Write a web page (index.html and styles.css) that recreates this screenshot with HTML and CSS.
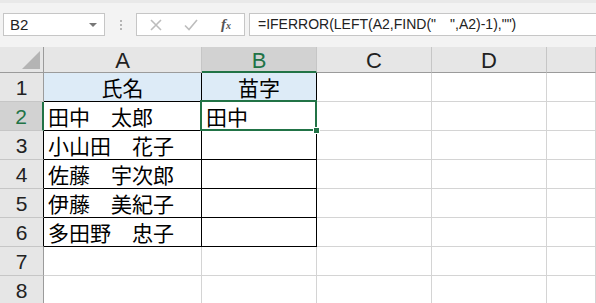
FILE: index.html
```html
<!DOCTYPE html>
<html lang="ja">
<head>
  <meta charset="UTF-8" />
  <meta name="viewport" content="width=device-width, initial-scale=1.0"/>
  <title>Excel - 苗字</title>
  <link rel="stylesheet" href="styles.css">
</head>
<body>
  <!-- 数式バー -->
  <div class="toolbar">
    <div class="name-box">
      <span>B2</span>
      <span class="drop"></span>
    </div>
    <div class="grip"><i></i><i></i><i></i></div>
    <div class="fx-box">
      <svg width="14" height="14" viewBox="0 0 14 14"><path d="M2 2 L12 12 M12 2 L2 12" stroke="#bdbdbd" stroke-width="1.6" fill="none"/></svg>
      <svg width="16" height="14" viewBox="0 0 16 14"><path d="M2 7.5 L6 11.5 L14 2" stroke="#bdbdbd" stroke-width="1.6" fill="none"/></svg>
      <span class="fx">f<sub>x</sub></span>
    </div>
    <div class="formula">=IFERROR(LEFT(A2,FIND("　",A2)-1),"")</div>
  </div>

  <!-- シート -->
  <div class="sheet">
    <div class="corner"><span class="tri"></span></div>
    <div class="col-h">A</div>
    <div class="col-h sel">B</div>
    <div class="col-h">C</div>
    <div class="col-h">D</div>
    <div class="col-h"></div>

    <div class="row-h">1</div>
    <div class="cell tb head">氏名</div>
    <div class="cell tb head">苗字</div>
    <div class="cell"></div>
    <div class="cell"></div>
    <div class="cell"></div>

    <div class="row-h sel">2</div>
    <div class="cell tb">田中　太郎</div>
    <div class="cell tb active">田中</div>
    <div class="cell"></div>
    <div class="cell"></div>
    <div class="cell"></div>

    <div class="row-h edge">3</div>
    <div class="cell tb">小山田　花子</div>
    <div class="cell tb"></div>
    <div class="cell"></div>
    <div class="cell"></div>
    <div class="cell"></div>

    <div class="row-h edge">4</div>
    <div class="cell tb">佐藤　宇次郎</div>
    <div class="cell tb"></div>
    <div class="cell"></div>
    <div class="cell"></div>
    <div class="cell"></div>

    <div class="row-h edge">5</div>
    <div class="cell tb">伊藤　美紀子</div>
    <div class="cell tb"></div>
    <div class="cell"></div>
    <div class="cell"></div>
    <div class="cell"></div>

    <div class="row-h edge">6</div>
    <div class="cell tb">多田野　忠子</div>
    <div class="cell tb"></div>
    <div class="cell"></div>
    <div class="cell"></div>
    <div class="cell"></div>

    <div class="row-h">7</div>
    <div class="cell"></div>
    <div class="cell"></div>
    <div class="cell"></div>
    <div class="cell"></div>
    <div class="cell"></div>

    <div class="row-h">8</div>
    <div class="cell"></div>
    <div class="cell"></div>
    <div class="cell"></div>
    <div class="cell"></div>
    <div class="cell"></div>
  </div>
</body>
</html>
```
FILE: styles.css
```css
body {
  margin: 0;
  overflow: hidden;
  background-color: #fff;
  font-family: "Liberation Sans", "Noto Sans CJK JP", sans-serif;
}
.toolbar {
  height: 47px;
  box-sizing: border-box;
  background-color: #f3f3f3;
  border-top: 3px solid #e9e9e9;
  padding: 10px 0 0 3px;
  display: flex;
  align-items: flex-start;
}
.name-box {
  width: 102px;
  height: 23px;
  box-sizing: border-box;
  background-color: #fff;
  border: 1px solid #c6c6c6;
  display: flex;
  align-items: center;
  justify-content: space-between;
  padding: 0 7px 0 6px;
  font-size: 15px;
  color: #222;
}
.drop {
  width: 0;
  height: 0;
  border-left: 4px solid transparent;
  border-right: 4px solid transparent;
  border-top: 4px solid #777;
}
.grip {
  width: 31px;
  height: 23px;
  display: flex;
  flex-direction: column;
  align-items: center;
  justify-content: center;
  gap: 2px;
}
.grip i {
  width: 2px;
  height: 2px;
  background-color: #b5b5b5;
}
.fx-box {
  width: 109px;
  height: 23px;
  box-sizing: border-box;
  background-color: #fff;
  border: 1px solid #c6c6c6;
  display: flex;
  align-items: center;
  padding: 0 0 0 12px;
  gap: 20px;
}
.fx {
  font-family: "Liberation Serif", serif;
  font-style: italic;
  font-weight: bold;
  font-size: 15px;
  color: #555;
  margin-left: 2px;
}
.fx sub {
  font-size: 10px;
  vertical-align: 0;
}
.formula {
  flex: 1;
  height: 23px;
  margin-left: 4px;
  box-sizing: border-box;
  background-color: #fff;
  border: 1px solid #c6c6c6;
  border-right: none;
  padding: 0 0 0 8px;
  font-size: 14px;
  line-height: 21px;
  color: #222;
  white-space: nowrap;
}
.sheet {
  display: grid;
  grid-template-columns: 44px 158px 115px 115px 115px 1fr;
  grid-template-rows: 26px;
  grid-auto-rows: 29px;
}
.corner,
.col-h,
.row-h,
.cell {
  box-sizing: border-box;
}
.corner {
  position: relative;
  background-color: #e6e6e6;
  border-right: 1px solid #9b9b9b;
  border-bottom: 1px solid #9b9b9b;
}
.tri {
  position: absolute;
  right: 3px;
  bottom: 3px;
  width: 0;
  height: 0;
  border-left: 18px solid transparent;
  border-bottom: 18px solid #b4b4b4;
}
.col-h {
  background-color: #e6e6e6;
  border-right: 1px solid #c6c6c6;
  border-bottom: 1px solid #9b9b9b;
  text-align: center;
  font-size: 22px;
  line-height: 27px;
  color: #222;
}
.col-h.sel {
  background-color: #d2d2d2;
  color: #217346;
  border-bottom: 2px solid #217346;
}
.row-h {
  background-color: #e6e6e6;
  border-right: 1px solid #9b9b9b;
  border-bottom: 1px solid #c6c6c6;
  text-align: center;
  font-size: 21px;
  line-height: 30px;
  color: #222;
}
.row-h.edge {
  border-right-color: #000;
}
.row-h.sel {
  background-color: #d2d2d2;
  color: #217346;
  border-right: 2px solid #217346;
}
.cell {
  border-right: 1px solid #d4d4d4;
  border-bottom: 1px solid #d4d4d4;
  font-family: "Noto Sans CJK JP", sans-serif;
  font-size: 21px;
  line-height: 29px;
  padding-left: 4px;
  color: #000;
  white-space: nowrap;
}
.cell.tb {
  border-right-color: #000;
  border-bottom-color: #000;
}
.cell.head {
  background-color: #ddebf7;
  text-align: center;
  padding-left: 0;
}
.cell.active {
  position: relative;
}
.cell.active::after {
  content: "";
  position: absolute;
  top: -2px;
  left: -2px;
  right: -1px;
  bottom: -1px;
  border: 2px solid #217346;
}
.cell.active::before {
  content: "";
  position: absolute;
  right: -4px;
  bottom: -4px;
  width: 5px;
  height: 5px;
  background-color: #217346;
  border: 1px solid #fff;
  z-index: 1;
}
```
